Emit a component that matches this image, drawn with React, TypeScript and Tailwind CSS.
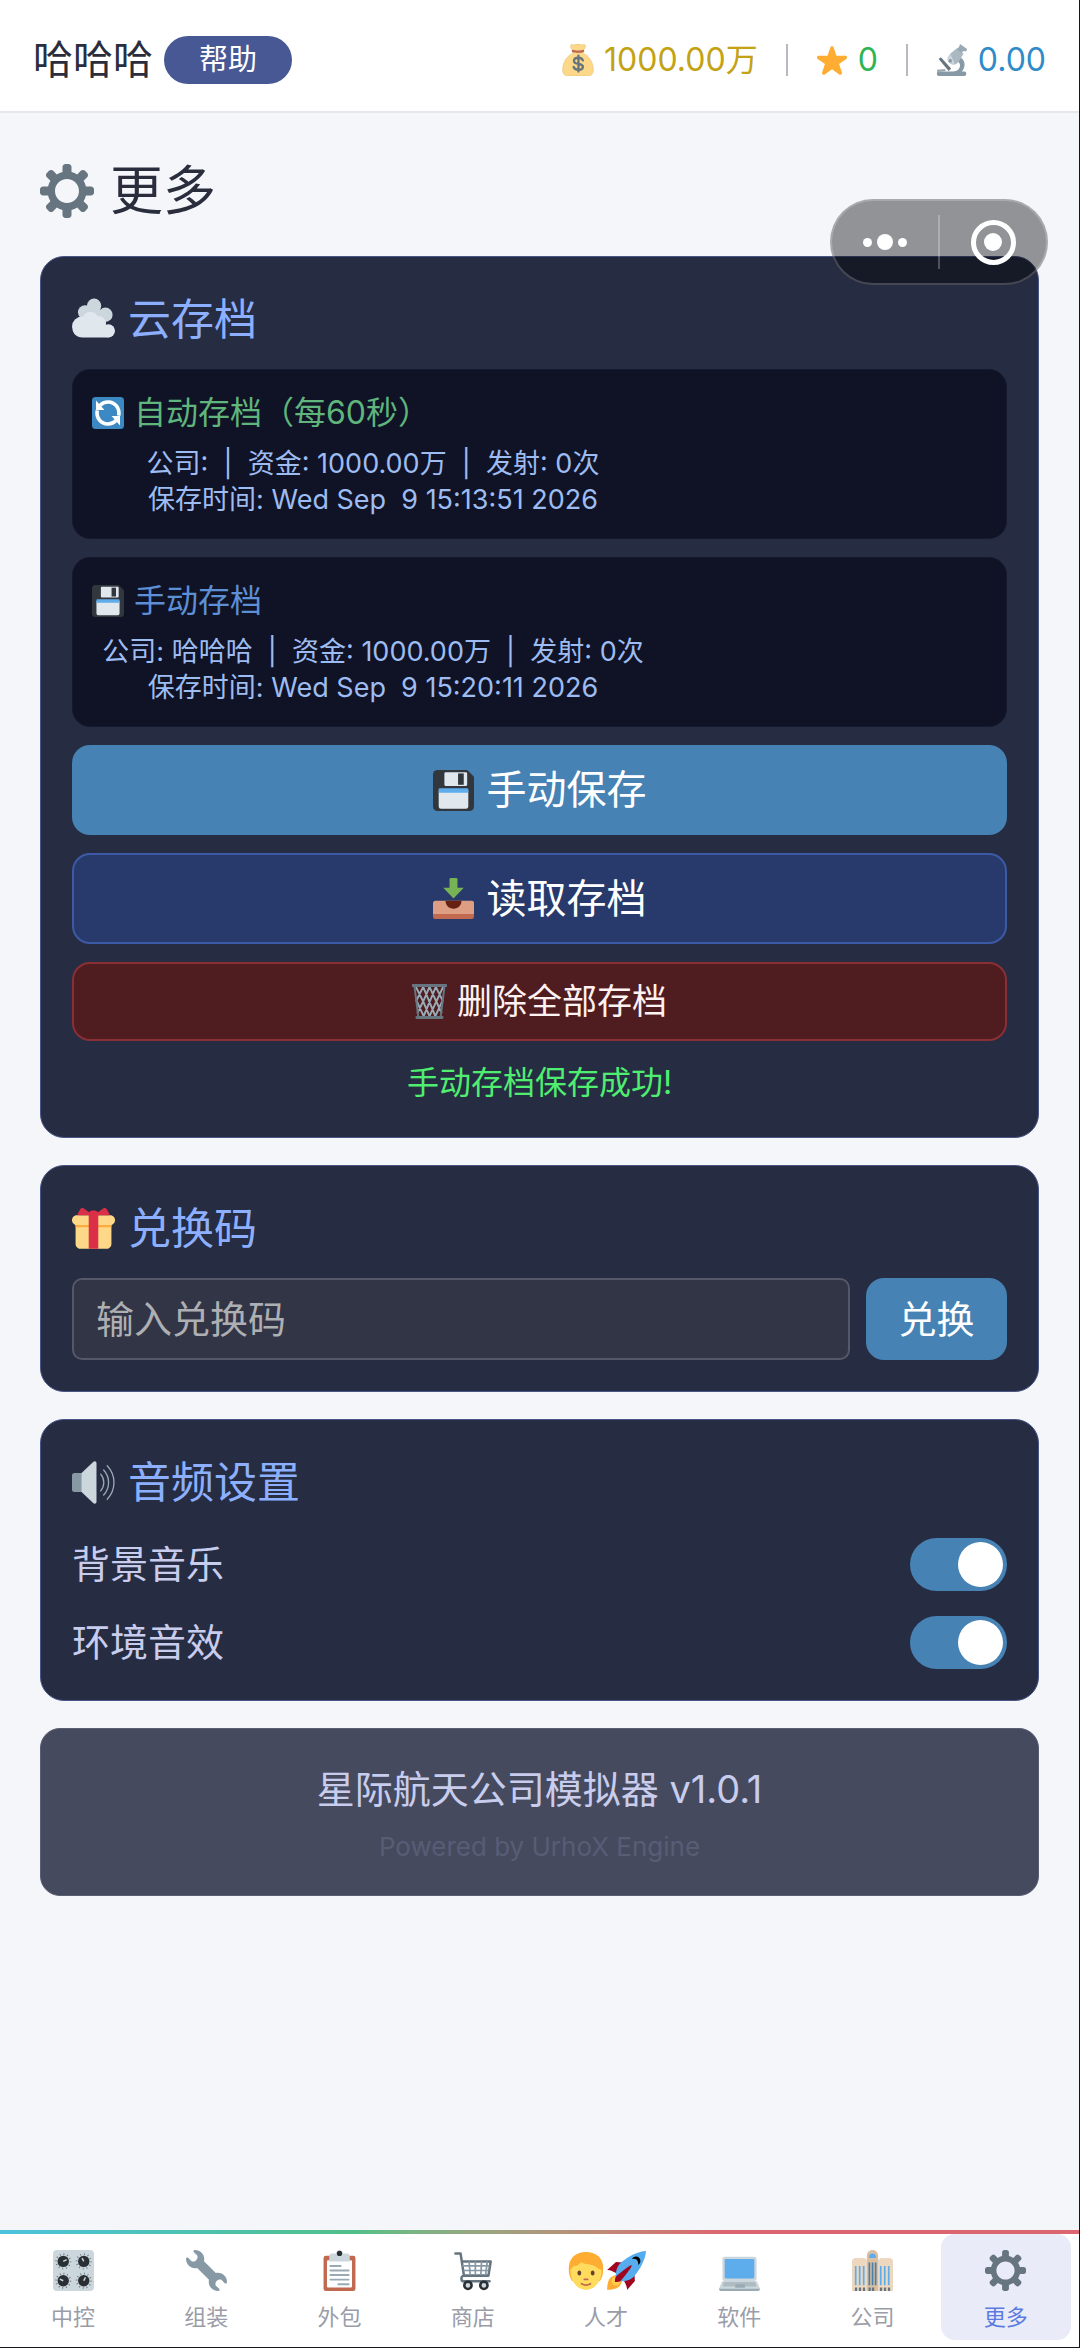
import { useState, type ReactNode } from 'react';

interface IconProps {
  className?: string;
}

function Svg({ className, children }: IconProps & { children: ReactNode }) {
  return (
    <svg viewBox="0 0 36 36" className={`shrink-0 ${className ?? ''}`} aria-hidden="true">
      {children}
    </svg>
  );
}

function GearIcon({ className }: IconProps) {
  return (
    <Svg className={className}>
      <path
        fill="#66757F"
        d="M34 15h-3.362c-.324-1.369-.864-2.651-1.582-3.814l2.379-2.379c.781-.781.781-2.048 0-2.829l-1.414-1.414c-.781-.781-2.047-.781-2.828 0l-2.379 2.379C23.65 6.225 22.369 5.686 21 5.362V2c0-1.104-.896-2-2-2h-2c-1.104 0-2 .896-2 2v3.362c-1.369.324-2.651.864-3.814 1.582L8.808 4.565c-.781-.781-2.048-.781-2.828 0L4.565 5.979c-.781.781-.781 2.048-.001 2.829l2.379 2.379C6.225 12.35 5.686 13.632 5.362 15H2c-1.104 0-2 .896-2 2v2c0 1.104.896 2 2 2h3.362c.324 1.368.864 2.65 1.582 3.813l-2.379 2.379c-.78.78-.78 2.048.001 2.829l1.414 1.414c.78.78 2.047.78 2.828 0l2.379-2.379c1.163.719 2.445 1.258 3.814 1.582V34c0 1.104.896 2 2 2h2c1.104 0 2-.896 2-2v-3.362c1.368-.324 2.65-.864 3.813-1.582l2.379 2.379c.781.781 2.047.781 2.828 0l1.414-1.414c.781-.781.781-2.048 0-2.829l-2.379-2.379c.719-1.163 1.258-2.445 1.582-3.814H34c1.104 0 2-.896 2-2v-2C36 15.896 35.104 15 34 15zM18 26c-4.418 0-8-3.582-8-8s3.582-8 8-8 8 3.582 8 8-3.582 8-8 8z"
      />
    </Svg>
  );
}

function MoneyBagIcon({ className }: IconProps) {
  return (
    <Svg className={className}>
      <path
        fill="#FDD888"
        d="M12 7c-2-2-3-4-2-6 1-1.400 3 .5 4 0s2-1 4-1 3 .5 4 1 3-1.400 4 0c1 2 0 4-2 6l-.5 3C30 13 34.500 20 35 26c1 6-1 10-6 10H7c-5 0-7-4-6-10 .5-6 5-13 11.500-16z"
        stroke="#D9B46A"
        strokeWidth=".5"
      />
      <path fill="#BF6952" d="M12 6.500c3 1.200 9 1.200 12 0 1 0 1.500 2 .5 2.500-3 1.400-10 1.400-13 0-1-.5-.5-2.500.5-2.500z" />
      <path
        fill="none"
        stroke="#67757F"
        strokeWidth="2.600"
        strokeLinecap="round"
        d="M18.500 13v18M23.500 18.500c-.8-2-2.700-3-5-3-3 0-5 1.300-5 3.500 0 5 10 2 10 6.500 0 2.300-2.200 3.500-5 3.500-2.700 0-4.800-1.200-5.400-3.300"
      />
    </Svg>
  );
}

function StarIcon({ className }: IconProps) {
  return (
    <Svg className={className}>
      <path
        fill="#FFAC33"
        d="M27.287 34.627c-.404 0-.806-.124-1.152-.371L18 28.422l-8.135 5.834c-.348.247-.748.371-1.153.371-.405 0-.81-.127-1.154-.377-.684-.5-.968-1.383-.705-2.189l3.203-9.456-8.145-5.789c-.688-.499-.98-1.385-.724-2.191.254-.807 1.001-1.358 1.846-1.37l9.914-.015 3.178-9.349C16.394 3.085 17.15 2.543 18 2.543s1.606.542 1.875 1.348l3.121 9.349 9.973.015c.847.012 1.594.563 1.85 1.37.256.807-.036 1.692-.724 2.191l-8.145 5.789 3.203 9.456c.263.806-.021 1.689-.705 2.189-.345.251-.748.377-1.161.377z"
      />
    </Svg>
  );
}

function MicroscopeIcon({ className }: IconProps) {
  return (
    <Svg className={className}>
      <path fill="#66757F" d="M3 17l2.500-2L17 27.500l-2.800 2.800z" />
      <path fill="#99AAB5" d="M1 29l9-1 1 2.500-9.500 1z" />
      <path fill="#8899A6" d="M24 14c6 1 9 6 8 11-.4 2.500-1.600 4.500-3 6h3c1.500 0 2 1 2 2.500S33.500 36 32 36H3c-1.500 0-2-1-2-2.500S1.500 31 3 31h16c5 0 8-3 8-7 0-3-1.500-4.500-4.500-5z" />
      <path fill="#AAB8C2" d="M17 10l7-5.500 7 6.500-5 8c-3 5-8 5-11 2s-2-7 2-11z" />
      <path fill="#CCD6DD" d="M13 15l3-4 5 11c-4 2-8-2-8-7z" />
      <path fill="#99AAB5" d="M27 0l8 5.500-1 3-3-.5-2.500 2.500-5-4.500L26 3z" />
      <circle cx="16" cy="19" r="2" fill="#8899A6" />
    </Svg>
  );
}

function CloudIcon({ className }: IconProps) {
  return (
    <Svg className={className}>
      <g fill="#CCD6DD">
        <circle cx="11" cy="12" r="6" />
        <circle cx="18.500" cy="6.500" r="6" />
        <circle cx="28" cy="14" r="6" />
        <path d="M8 10h20v14H8z" />
      </g>
      <g fill="#E1E8ED">
        <circle cx="8.500" cy="24" r="8.500" />
        <circle cx="15.500" cy="18" r="6.500" />
        <circle cx="22" cy="21.500" r="6.500" />
        <circle cx="30.500" cy="27.500" r="5.500" />
        <path d="M8 24h22l.5 9h-22C5 33 2 31 1 28z" />
      </g>
    </Svg>
  );
}

function SyncIcon({ className }: IconProps) {
  return (
    <Svg className={className}>
      <rect width="36" height="36" rx="4" fill="#3B88C3" />
      <path fill="none" stroke="#FFF" strokeWidth="4" d="M9 9.500C14 4 23 4.500 27.500 10c3 4 3.500 7 2.500 11M27 26.500c-5 5.500-14 5-18.500-.5-3-4-3.500-7-2.500-11" />
      <path fill="#FFF" d="M4.500 4v10.500H14zM31.500 32V21.500H22z" />
    </Svg>
  );
}

function FloppyIcon({ className }: IconProps) {
  return (
    <Svg className={className}>
      <path fill="#31373D" d="M4 0h26l6 6v26a4 4 0 0 1-4 4H4a4 4 0 0 1-4-4V4a4 4 0 0 1 4-4z" />
      <path fill="#E1E8ED" d="M11 2h18a1 1 0 0 1 1 1v10a1 1 0 0 1-1 1H11a1 1 0 0 1-1-1V3a1 1 0 0 1 1-1zM5 18h26v14a2 2 0 0 1-2 2H7a2 2 0 0 1-2-2z" />
      <path fill="#31373D" d="M22 3h5v10h-5z" />
      <path fill="#5DADEC" d="M6 16h24a1 1 0 0 1 1 1v3H5v-3a1 1 0 0 1 1-1z" />
    </Svg>
  );
}

function InboxIcon({ className }: IconProps) {
  return (
    <Svg className={className}>
      <path fill="#77B255" d="M14.500 1a1 1 0 0 1 1-1h5a1 1 0 0 1 1 1v7.500H27L18 18 9 8.500h5.500z" />
      <path fill="#DD9E84" d="M2 20h32a2 2 0 0 1 2 2v12H0V22c0-1.100.9-2 2-2z" />
      <path fill="#662113" d="M11 20h14c0 4-3 7-7 7s-7-3-7-7z" />
      <path fill="#C16A4F" d="M0 31.500h36V34a2 2 0 0 1-2 2H2a2 2 0 0 1-2-2z" />
    </Svg>
  );
}

function TrashIcon({ className }: IconProps) {
  return (
    <Svg className={className}>
      <g fill="none" stroke="#99AAB5" strokeWidth="2">
        <path d="M4 3l7.500 15L5.500 30M11.500 3L4.500 17 12 33M11.500 3L24 33M18 3l7 15-7 15M18 3l-6.500 15L18 33M24.500 3L12 33M24.500 3l7 14L24 33M32 3l-7 15 5.500 12" />
      </g>
      <path fill="none" stroke="#66757F" strokeWidth="2" d="M2.500 2l4 32M33.500 2l-4 32" />
      <path fill="#66757F" d="M1 0h34a1 1 0 0 1 0 3H1a1 1 0 0 1 0-3zM5 33h26a1 1 0 0 1 0 3H5a1 1 0 0 1 0-3z" />
    </Svg>
  );
}

function GiftIcon({ className }: IconProps) {
  return (
    <Svg className={className}>
      <path fill="#FDD888" d="M33 31c0 2.200-1.800 4-4 4H7c-2.200 0-4-1.800-4-4V14c0-2.200 1.800-4 4-4h22c2.200 0 4 1.800 4 4v17z" />
      <path fill="#FDD888" d="M36 11c0 2.200-1.800 4-4 4H4c-2.200 0-4-1.800-4-4s1.800-4 4-4h28c2.200 0 4 1.800 4 4z" />
      <path fill="#FCAB40" d="M3 15h30v2H3z" />
      <path fill="#DA2F47" d="M19 3h-2c-1.657 0-3 1.343-3 3v29h8V6c0-1.657-1.343-3-3-3z" />
      <path
        fill="#DA2F47"
        d="M16 7c1.100 0 1.263-.516.361-1.147L9.639 1.147C8.737.516 7.554.781 7.008 1.736L4.992 5.264C4.446 6.219 4.900 7 6 7h10zm4 0c-1.100 0-1.263-.516-.361-1.147l6.723-4.706c.901-.631 2.085-.366 2.631.589l2.016 3.527C31.554 6.219 31.100 7 30 7H20z"
      />
    </Svg>
  );
}

function SpeakerIcon({ className }: IconProps) {
  return (
    <Svg className={className}>
      <path fill="#8899A6" d="M2 10h7v16H2a2 2 0 0 1-2-2V12c0-1.100.9-2 2-2z" />
      <path fill="#CCD6DD" d="M8 10L17.500 1c1.300-1.200 3-1 3 1v32c0 2-1.700 2.200-3 1L8 26z" />
      <g fill="none" stroke="#99AAB5" strokeWidth="1.100" strokeLinecap="round">
        <path d="M24 11c3.500 4 3.500 10 0 14" />
        <path d="M26.500 7.500c5.500 6 5.500 15 0 21" />
        <path d="M29.500 4c7.500 8 7.500 20 0 28" />
      </g>
    </Svg>
  );
}

function KnobsIcon({ className }: IconProps) {
  const knobs = [
    { cx: 9, cy: 10, line: 'M9 10l3-1.500' },
    { cx: 27, cy: 10, line: 'M27 10l-1.500-3' },
    { cx: 9, cy: 27, line: 'M9 27l-3-1.500' },
    { cx: 27, cy: 27, line: 'M27 27l1.500-3' },
  ];
  return (
    <Svg className={className}>
      <rect width="36" height="36" rx="3.500" fill="#CCD6DD" />
      {knobs.map((k) => (
        <g key={k.line}>
          <circle cx={k.cx} cy={k.cy} r="6.300" fill="none" stroke="#66757F" strokeWidth="1.500" strokeDasharray=".8 2.500" />
          <circle cx={k.cx} cy={k.cy} r="5" fill="#292F33" />
          <path d={k.line} stroke="#CCD6DD" strokeWidth="1.300" />
        </g>
      ))}
    </Svg>
  );
}

function WrenchIcon({ className }: IconProps) {
  return (
    <Svg className={className}>
      <path
        fill="#8899A6"
        d="M27.989 19.977c-.622 0-1.225.078-1.806.213L15.811 9.818c.134-.581.212-1.184.212-1.806C16.023 3.587 12.436 0 8.012 0 7.110 0 5.910.916 6.909 1.915l2.997 2.997s.999 1.998-.999 3.995-3.996.998-3.996.998L1.915 6.909C.916 5.910 0 7.105 0 8.012c0 4.425 3.587 8.012 8.012 8.012.622 0 1.225-.078 1.806-.212L20.190 26.183c-.135.582-.213 1.185-.213 1.807 0 4.424 3.587 8.012 8.012 8.012.901 0 2.102-.916 1.103-1.914l-2.998-2.997s-.998-1.998.999-3.996 3.996-.998 3.996-.998l2.996 2.997c.999.999 1.915-.196 1.915-1.104 0-4.425-3.587-8.012-8.011-8.013z"
      />
    </Svg>
  );
}

function ClipboardIcon({ className }: IconProps) {
  return (
    <Svg className={className}>
      <rect x="4" y="5" width="28" height="31" rx="2" fill="#C1694F" />
      <rect x="7" y="9" width="22" height="24" rx="1" fill="#FFF" />
      <path fill="#CCD6DD" d="M25 3h-4c0-1.657-1.343-3-3-3s-3 1.343-3 3h-4c-1.104 0-2 .896-2 2v5h18V5c0-1.104-.896-2-2-2z" />
      <circle cx="18" cy="3" r="2.300" fill="#292F33" />
      <path stroke="#99AAB5" strokeWidth="1.700" strokeLinecap="round" d="M10 14h9M10 18h16M10 22h16M10 26h16M17 30h9" />
    </Svg>
  );
}

function CartIcon({ className }: IconProps) {
  return (
    <Svg className={className}>
      <path fill="none" stroke="#66757F" strokeWidth="2.200" strokeLinecap="round" strokeLinejoin="round" d="M3 3h4.500l3 19.500H32L34 10H9M10.500 22.500c-3 .5-3 5 0 5H33" />
      <path fill="none" stroke="#8899A6" strokeWidth="1.500" d="M9 14h24M10 18h22M15 10l1 12M20.500 10v12M26 10l-.7 12M31 10l-1.500 12" />
      <circle cx="14" cy="31" r="3.200" fill="#CCD6DD" stroke="#292F33" strokeWidth="2.200" />
      <circle cx="28" cy="31" r="3.200" fill="#CCD6DD" stroke="#292F33" strokeWidth="2.200" />
    </Svg>
  );
}

function PersonIcon({ className }: IconProps) {
  return (
    <Svg className={className}>
      <path fill="#FFAC33" d="M18 1C8 1 2.500 7 2.500 16c0 5 1 8 3 11h25c2-3 3-6 3-11 0-9-5.500-15-15.500-15z" />
      <path fill="#FFDC5D" d="M4 17c0-1 2-2 3.500-4C10 15 12 11 14 10c3 3 9 1 14 5 2 1.500 4 1 4 3 0 9-6 17-14 17S4 27 4 17z" />
      <path fill="#664131" d="M12 17.500c1 0 1.700.9 1.700 2.300S13 22 12 22s-1.700-.8-1.700-2.200.7-2.300 1.700-2.300zM24 17.500c1 0 1.700.9 1.700 2.300S25 22 24 22s-1.700-.8-1.700-2.200.7-2.300 1.700-2.300z" />
      <path fill="none" stroke="#C1694F" strokeWidth="1.600" strokeLinecap="round" d="M16.500 25.500h3M14 29.500c2.500 1.500 5.500 1.500 8 0" />
    </Svg>
  );
}

function RocketIcon({ className }: IconProps) {
  return (
    <Svg className={className}>
      <path fill="#A0041E" d="M1 17l8-7 16 1 1 16-7 8s.001-5.999-6-12-12-6-12-6z" />
      <path fill="#FFAC33" d="M.973 35s-.036-7.979 2.985-11S15 21.187 15 21.187 14.999 29 11.999 32c-3 3-11.026 3-11.026 3z" />
      <circle fill="#FFCC4D" cx="9" cy="27" r="4" />
      <path fill="#55ACEE" d="M35.999 0s-10 0-22 10c-6 5-6 14-4 16s11 2 16-4c10-12 10-22 10-22z" />
      <path d="M26.999 5c-1.623 0-3.013.971-3.641 2.360.502-.227 1.055-.360 1.641-.360 2.209 0 4 1.791 4 4 0 .586-.133 1.139-.359 1.640 1.389-.627 2.359-2.017 2.359-3.640 0-2.209-1.791-4-4-4z" />
      <path fill="#A0041E" d="M8 28s0-4 1-5 13.001-10.999 14-10-9.001 13-10.001 14S8 28 8 28z" />
    </Svg>
  );
}

function LaptopIcon({ className }: IconProps) {
  return (
    <Svg className={className}>
      <path
        fill="#CCD6DD"
        d="M34 29.096c-.417-.963-.896-2.008-2-2.008h-1c1.104 0 2-.899 2-2.008V8.008C33 6.899 32.104 6 31 6H5c-1.104 0-2 .899-2 2.008V25.080c0 1.109.896 2.008 2 2.008H4c-1.104 0-1.667 1.004-2 2.008l-2 4.895C0 35.101.896 36 2 36h32c1.104 0 2-.899 2-2.008l-2-4.896z"
      />
      <path fill="#9AAAB4" d="M.008 34.075l.006.057.170.692C.5 35.516 1.192 36 2 36h32c1.076 0 1.947-.855 1.992-1.925H.008z" />
      <rect x="5" y="8" width="26" height="17" rx="1" fill="#5DADEC" />
      <path fill="#AEBBC1" d="M32.906 31.042l-.760-2.175c-.239-.460-.635-.837-1.188-.837H5.110c-.552 0-.906.336-1.096.863l-.829 2.131c-.2.557.339 1.006.891 1.006h28.080c.552 0 .969-.430.750-.988z" />
      <path fill="#9AAAB4" d="M22.375 33.113h-7.781c-.375 0-.538-.343-.484-.675.054-.331.359-1.793.383-1.963.023-.171.274-.375.524-.375h7.015c.297 0 .490.163.550.489.059.327.302 1.641.321 1.941.019.301-.169.583-.528.583z" />
    </Svg>
  );
}

function BuildingIcon({ className }: IconProps) {
  return (
    <Svg className={className}>
      <path fill="#EDD8BF" d="M0 9l2-2h9l2 2v27H0zM23 9l2-2h9l2 2v27H23z" />
      <path fill="#D9BFA3" d="M13 6c0-4 2-6 5-6s5 2 5 6v30H13z" />
      <path fill="#5DADEC" d="M15 6c0-2 1-3 3-3s3 1 3 3v1h-6z" />
      <path fill="#5DADEC" d="M2.500 14H4v17H2.500zM6 14h1.500v17H6zM9.500 14H11v17H9.500zM24.500 14H26v17h-1.500zM28 14h1.500v17H28zM31.500 14H33v17h-1.500z" />
      <path fill="#4B7FA8" d="M14.500 11H16v20h-1.500zM17.300 11h1.500v20h-1.500zM20 11h1.500v20H20z" />
      <path fill="#66757F" d="M2.500 33h2v3h-2zM6 33h2v3H6zM9.500 33h2v3h-2zM14.500 33h2v3h-2zM17.500 33h2v3h-2zM24.500 33h2v3h-2zM28 33h2v3h-2zM31.500 33h2v3h-2z" />
    </Svg>
  );
}

function Card({ icon, title, children }: { icon: ReactNode; title: string; children: ReactNode }) {
  return (
    <section className="rounded-[24px] border border-[#4a5688] bg-[#262c42] p-[31px]">
      <h2 className="flex items-center gap-[13px] text-[43px] leading-[62px] text-[#8cb0ff]">
        {icon}
        {title}
      </h2>
      {children}
    </section>
  );
}

interface SaveSlotProps {
  icon: ReactNode;
  title: string;
  titleClass: string;
  summary: string;
  savedAt: string;
}

function SaveSlot({ icon, title, titleClass, summary, savedAt }: SaveSlotProps) {
  return (
    <div className="rounded-[18px] border border-[#151a30] bg-[#101325] px-[19px] pt-[20px] pb-[20px]">
      <h3 className={`mb-[10px] flex items-center gap-[10px] text-[32px] leading-[46px] ${titleClass}`}>
        {icon}
        {title}
      </h3>
      <div className="max-w-[562px] text-center text-[27px] leading-[36px] whitespace-pre text-[#9dbcf2]">
        <p>{summary}</p>
        <p>{savedAt}</p>
      </div>
    </div>
  );
}

interface ToggleRowProps {
  id: string;
  label: string;
  checked: boolean;
  onChange: (value: boolean) => void;
}

function ToggleRow({ id, label, checked, onChange }: ToggleRowProps) {
  return (
    <div className="mt-[24px] flex items-center justify-between">
      <label htmlFor={id} className="text-[38px] leading-[54px] text-[#c8cdee]">
        {label}
      </label>
      <input
        id={id}
        type="checkbox"
        role="switch"
        checked={checked}
        onChange={(e) => onChange(e.target.checked)}
        className="flex h-[53px] w-[97px] appearance-none items-center rounded-full bg-[#565b6e] px-[4px] before:size-[45px] before:rounded-full before:bg-white checked:justify-end checked:bg-[#4682b4]"
      />
    </div>
  );
}

const NAV_ITEMS = [
  { label: '中控', icon: <KnobsIcon className="size-[41px]" /> },
  { label: '组装', icon: <WrenchIcon className="size-[41px]" /> },
  { label: '外包', icon: <ClipboardIcon className="size-[41px]" /> },
  { label: '商店', icon: <CartIcon className="size-[41px]" /> },
  {
    label: '人才',
    icon: (
      <>
        <PersonIcon className="size-[40px]" />
        <RocketIcon className="size-[40px]" />
      </>
    ),
  },
  { label: '软件', icon: <LaptopIcon className="size-[41px]" /> },
  { label: '公司', icon: <BuildingIcon className="size-[41px]" /> },
  { label: '更多', icon: <GearIcon className="size-[41px]" /> },
];

export default function App() {
  const [music, setMusic] = useState(true);
  const [ambient, setAmbient] = useState(true);
  const [code, setCode] = useState('');
  const [tab, setTab] = useState('更多');

  return (
    <div className="relative flex min-h-screen flex-col border-r border-b border-[#15161c] bg-[#f4f6fa] font-['Inter','Noto_Sans_CJK_SC',sans-serif]">
      <header className="flex items-center justify-between border-b-2 border-[#e5e7ec] bg-white px-[33px] pt-[36px] pb-[27px]">
        <div className="flex items-center gap-[11px]">
          <span className="text-[40px] leading-[48px] text-[#2a2d3c]">哈哈哈</span>
          <button type="button" className="h-[48px] rounded-full bg-[#475895] px-[35px] text-[29px] leading-[48px] text-white">
            帮助
          </button>
        </div>
        <div className="flex items-center gap-[28px] text-[32px] leading-[48px]">
          <span className="flex items-center gap-[10px] text-[#c3a214]">
            <MoneyBagIcon className="size-[32px]" />
            1000.00万
          </span>
          <span className="h-[32px] w-[2px] bg-[#b6b8c2]" />
          <span className="flex items-center gap-[10px] text-[#2db553]">
            <StarIcon className="size-[32px]" />
            0
          </span>
          <span className="h-[32px] w-[2px] bg-[#b6b8c2]" />
          <span className="flex items-center gap-[10px] text-[#2f8cc9]">
            <MicroscopeIcon className="size-[32px]" />
            0.00
          </span>
        </div>
      </header>

      <div className="absolute top-[199px] right-[31px] z-10 flex h-[86px] w-[218px] items-center rounded-full border-2 border-white/20 bg-black/40">
        <button type="button" aria-label="菜单" className="flex h-full flex-1 items-center justify-center gap-[5px]">
          <span className="size-[9px] rounded-full bg-white" />
          <span className="size-[16px] rounded-full bg-white" />
          <span className="size-[9px] rounded-full bg-white" />
        </button>
        <span className="h-[54px] w-[2px] bg-white/25" />
        <button type="button" aria-label="关闭" className="flex h-full flex-1 items-center justify-center">
          <span className="flex size-[45px] items-center justify-center rounded-full border-5 border-white">
            <span className="size-[18px] rounded-full bg-white" />
          </span>
        </button>
      </div>

      <main className="flex flex-1 flex-col gap-[27px] px-[40px] pt-[40px] pb-[40px]">
        <h1 className="flex items-center gap-[16px] text-[53px] leading-[76px] text-[#2a2d3c]">
          <GearIcon className="size-[54px]" />
          更多
        </h1>

        <Card icon={<CloudIcon className="size-[43px]" />} title="云存档">
          <div className="mt-[19px] flex flex-col gap-[18px]">
            <SaveSlot
              icon={<SyncIcon className="size-[32px]" />}
              title="自动存档（每60秒）"
              titleClass="text-[#5fb57c]"
              summary="公司:  |  资金: 1000.00万  |  发射: 0次"
              savedAt="保存时间: Wed Sep  9 15:13:51 2026"
            />
            <SaveSlot
              icon={<FloppyIcon className="size-[32px]" />}
              title="手动存档"
              titleClass="text-[#5c8fd6]"
              summary="公司: 哈哈哈  |  资金: 1000.00万  |  发射: 0次"
              savedAt="保存时间: Wed Sep  9 15:20:11 2026"
            />
            <button type="button" className="flex h-[90px] items-center justify-center gap-[13px] rounded-[18px] bg-[#4682b4] text-[40px] text-white">
              <FloppyIcon className="size-[41px]" />
              手动保存
            </button>
            <button type="button" className="flex h-[91px] items-center justify-center gap-[13px] rounded-[18px] border-2 border-[#3c5aa6] bg-[#283a6c] text-[40px] text-white">
              <InboxIcon className="size-[41px]" />
              读取存档
            </button>
            <button type="button" className="flex h-[79px] items-center justify-center gap-[10px] rounded-[18px] border-2 border-[#8a2f36] bg-[#4f1c1f] text-[35px] text-[#fdf1f1]">
              <TrashIcon className="size-[35px]" />
              删除全部存档
            </button>
            <p role="status" className="text-center text-[32px] leading-[47px] text-[#4fee71]">
              手动存档保存成功!
            </p>
          </div>
        </Card>

        <Card icon={<GiftIcon className="size-[43px]" />} title="兑换码">
          <div className="mt-[19px] flex gap-[16px]">
            <input
              type="text"
              aria-label="兑换码"
              value={code}
              onChange={(e) => setCode(e.target.value)}
              placeholder="输入兑换码"
              className="h-[82px] min-w-0 flex-1 rounded-[10px] border-2 border-[#555868] bg-[#323545] px-[22px] text-[38px] text-white placeholder:text-[#aeafb3]"
            />
            <button type="button" className="h-[82px] w-[141px] rounded-[18px] bg-[#4682b4] text-[38px] text-white">
              兑换
            </button>
          </div>
        </Card>

        <Card icon={<SpeakerIcon className="size-[43px]" />} title="音频设置">
          <ToggleRow id="music" label="背景音乐" checked={music} onChange={setMusic} />
          <ToggleRow id="ambient" label="环境音效" checked={ambient} onChange={setAmbient} />
        </Card>

        <footer className="rounded-[20px] border border-[#5a5e74] bg-[#464a5e] px-[31px] pt-[30px] pb-[28px] text-center">
          <p className="text-[38px] leading-[60px] text-[#c8cdee]">星际航天公司模拟器 v1.0.1</p>
          <p className="mt-[8px] text-[26px] leading-[40px] text-[#585d76]">Powered by UrhoX Engine</p>
        </footer>
      </main>

      <nav className="bg-white">
        <div className="h-[4px] bg-linear-to-r from-[#4cc3dd] via-[#52bf88] via-33% to-[#dc6670] to-67%" />
        <ul className="grid grid-cols-8 gap-[3px] px-[8px] pb-[7px]">
          {NAV_ITEMS.map((item) => {
            const active = item.label === tab;
            return (
              <li key={item.label}>
                <button
                  type="button"
                  aria-current={active ? 'page' : undefined}
                  onClick={() => setTab(item.label)}
                  className={`flex w-full flex-col items-center gap-[11px] rounded-[14px] pt-[16px] pb-[8px] text-[22px] leading-[30px] ${
                    active ? 'bg-[#e9ecf8] text-[#5b7be0]' : 'text-[#9a9ca8]'
                  }`}
                >
                  <span className="flex h-[41px] items-center">{item.icon}</span>
                  {item.label}
                </button>
              </li>
            );
          })}
        </ul>
      </nav>
    </div>
  );
}
